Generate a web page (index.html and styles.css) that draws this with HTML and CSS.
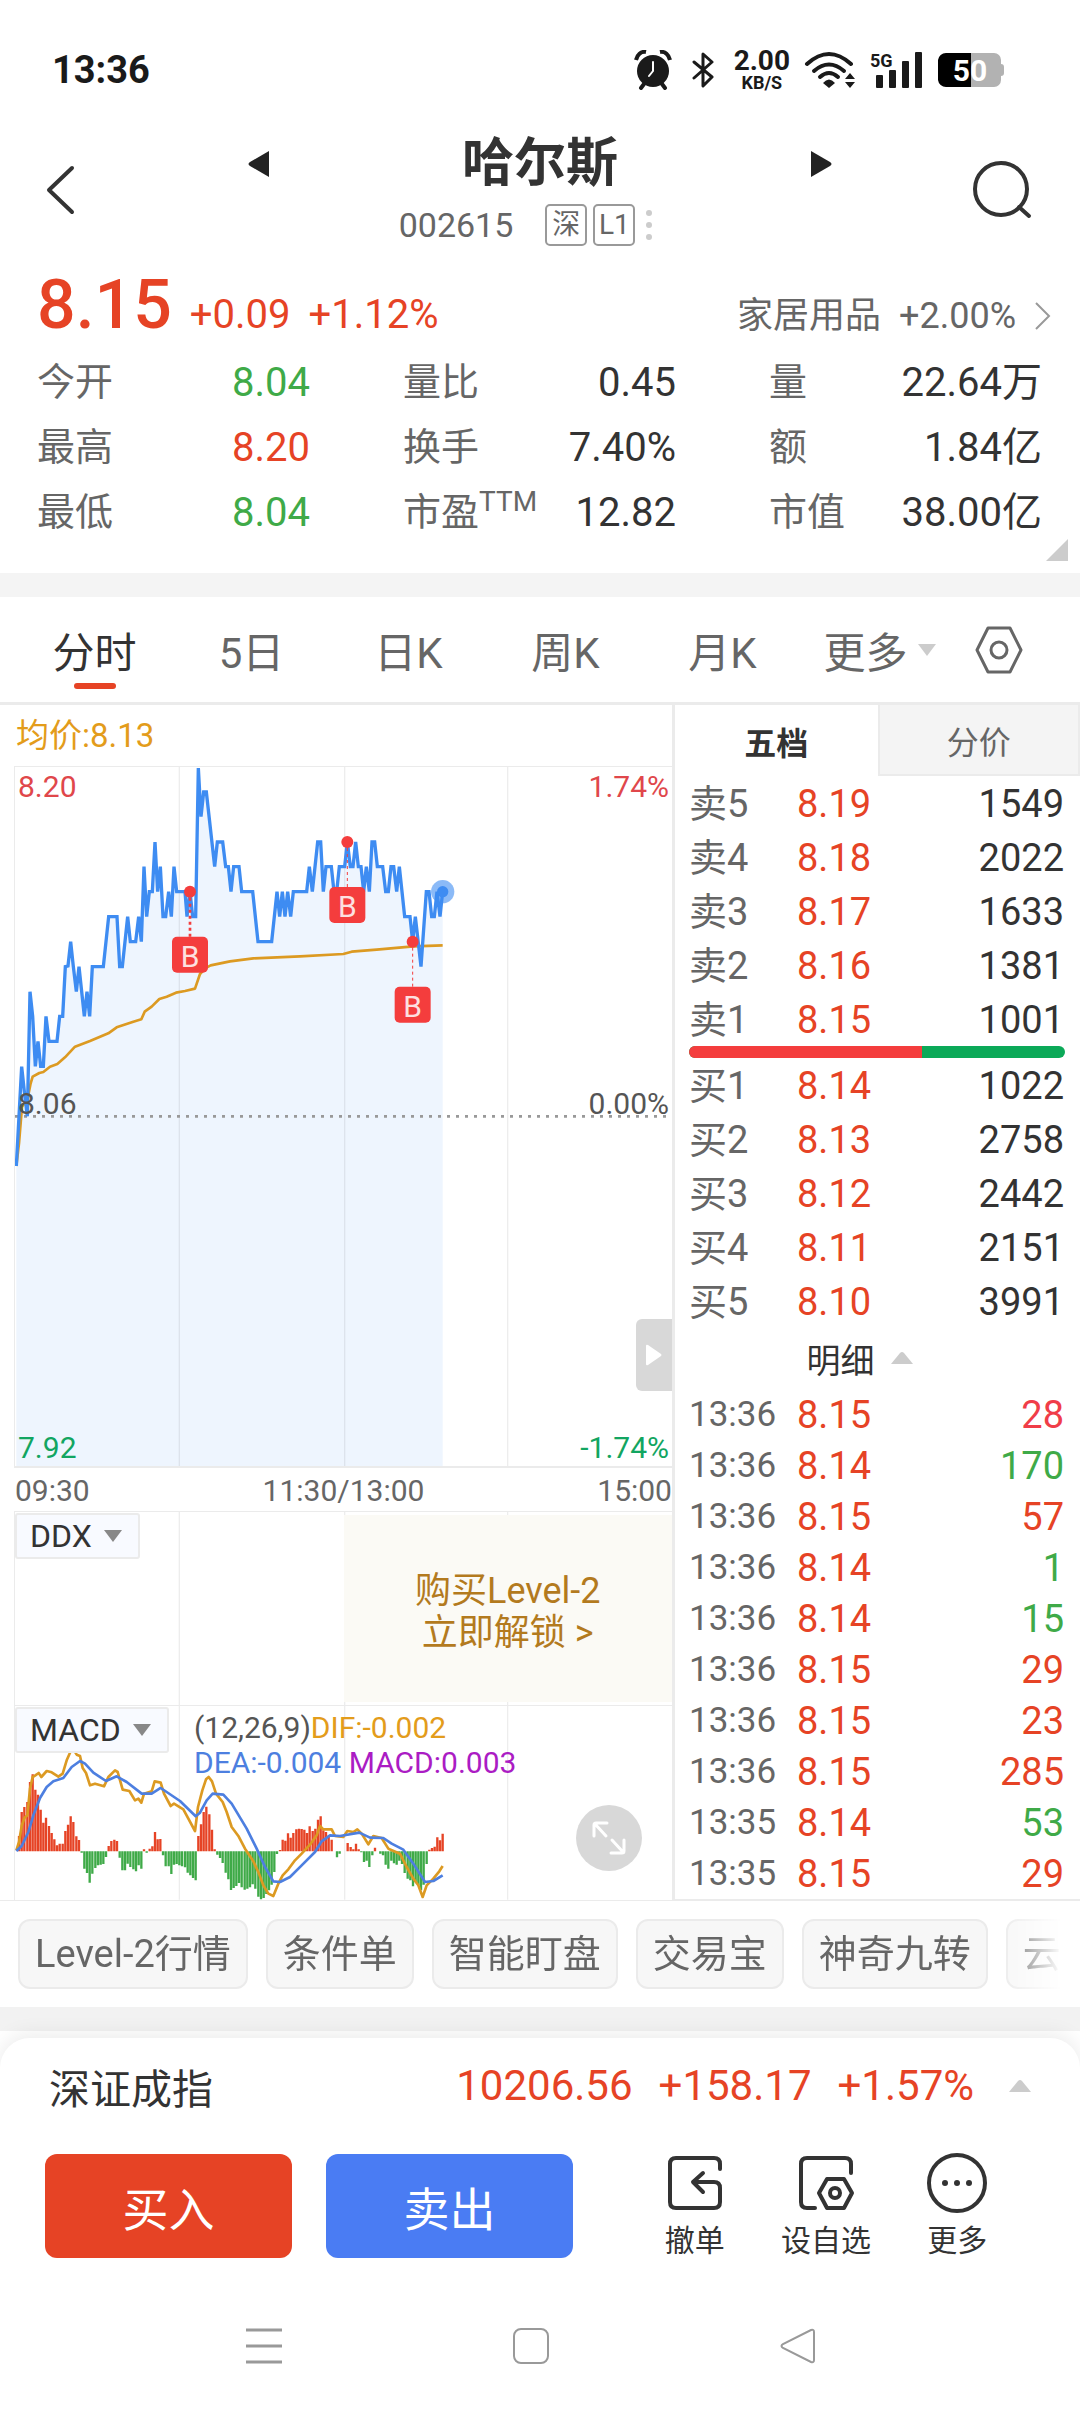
FILE: index.html
```html
<!DOCTYPE html>
<html lang="zh-CN">
<head>
<meta charset="utf-8">
<meta name="viewport" content="width=device-width, initial-scale=1">
<title>哈尔斯 002615</title>
<link rel="stylesheet" href="styles.css">
</head>
<body>
<div class="app">
  <div class="status">
    <span class="status-time">13:36</span>
    <div class="status-icons">
      <svg class="spaced" width="38" height="40" viewBox="0 0 38 40"><circle cx="19" cy="21" r="16" fill="#1a1a1a"/><path d="M2 10C3 5 7 1 12 2M36 10C35 5 31 1 26 2" fill="none" stroke="#1a1a1a" stroke-width="4"/><path d="M10 34l-3 4M28 34l3 4" stroke="#1a1a1a" stroke-width="4" stroke-linecap="round"/><path d="M19 12v9l-4 5" fill="none" stroke="#fff" stroke-width="2" stroke-linecap="round"/></svg>
      <svg class="spaced" width="22" height="38" viewBox="0 0 22 38"><path d="M2 11l18 15-9 9V3l9 8L2 27" fill="none" stroke="#1a1a1a" stroke-width="3" stroke-linejoin="round" stroke-linecap="round"/></svg>
      <span class="net-speed"><b>2.00</b><b class="net-unit">KB/S</b></span>
      <svg width="52" height="38" viewBox="0 0 52 38"><g fill="none" stroke="#1a1a1a" stroke-width="4" stroke-linecap="round"><path d="M3 13Q25-7 47 13"/><path d="M10 20Q25 7 40 20"/><path d="M16 26Q25 18 34 26"/></g><path d="M19 32Q25 25 31 32L25 37z" fill="#1a1a1a"/><path d="M41 28l5-6 5 6zM41 31l5 6 5-6z" fill="#1a1a1a"/></svg>
      <svg class="signal" width="54" height="38" viewBox="0 0 54 38"><text x="0" y="16" class="five-g">5G</text><g fill="#1a1a1a"><rect x="6" y="24" width="7" height="13" rx="1"/><rect x="19" y="19" width="7" height="18" rx="1"/><rect x="32" y="10" width="7" height="27" rx="1"/><rect x="45" y="1" width="7" height="36" rx="1"/></g></svg>
      <svg width="66" height="36" viewBox="0 0 66 36"><path d="M33 1h23a7 7 0 0 1 7 7v4q3 0 3 3v6q0 3-3 3v4a7 7 0 0 1-7 7H33z" fill="#b2b2b2"/><path d="M33 1H8a8 8 0 0 0-8 7v20a8 8 0 0 0 8 7h25z" fill="#000"/><text x="32" y="29" class="battery">50</text></svg>
    </div>
  </div>

  <header class="head">
    <button class="icon-btn" aria-label="返回"><svg width="34" height="52" viewBox="0 0 34 52"><path d="M28 4L5 26l23 22" fill="none" stroke="#333" stroke-width="4" stroke-linecap="round" stroke-linejoin="round"/></svg></button>
    <div class="head-mid">
      <div class="head-title">
        <button class="icon-btn" aria-label="上一只"><svg width="24" height="28" viewBox="0 0 24 28"><path d="M22 1v26L3 16q-3-2 0-4z" fill="#222"/></svg></button>
        <h1>哈尔斯</h1>
        <button class="icon-btn" aria-label="下一只"><svg width="24" height="28" viewBox="0 0 24 28"><path d="M2 1v26l19-11q3-2 0-4z" fill="#222"/></svg></button>
      </div>
      <div class="head-code"><span>002615</span><span class="tag">深</span><span class="tag">L1</span><svg width="8" height="32" viewBox="0 0 8 32" fill="#ccc"><circle cx="4" cy="4" r="3"/><circle cx="4" cy="16" r="3"/><circle cx="4" cy="28" r="3"/></svg></div>
    </div>
    <button class="icon-btn" aria-label="搜索"><svg width="60" height="60" viewBox="0 0 60 60"><circle cx="29" cy="29" r="26" fill="none" stroke="#333" stroke-width="4"/><path d="M47 47l10 9" stroke="#333" stroke-width="4" stroke-linecap="round"/></svg></button>
  </header>

  <section class="quote">
    <div class="quote-top">
      <strong class="price">8.15</strong><span class="change">+0.09</span><span class="change">+1.12%</span>
      <a class="sector" href="#sector"><span>家居用品</span><span class="sector-pct">+2.00%</span><svg width="18" height="30" viewBox="0 0 18 30"><path d="M2 2l13 13L2 28" fill="none" stroke="#999" stroke-width="2"/></svg></a>
    </div>
    <dl class="stats">
      <div><dt>今开</dt><dd class="down">8.04</dd></div>
      <div><dt>量比</dt><dd>0.45</dd></div>
      <div><dt>量</dt><dd>22.64万</dd></div>
      <div><dt>最高</dt><dd class="up">8.20</dd></div>
      <div><dt>换手</dt><dd>7.40%</dd></div>
      <div><dt>额</dt><dd>1.84亿</dd></div>
      <div><dt>最低</dt><dd class="down">8.04</dd></div>
      <div><dt>市盈<sup>TTM</sup></dt><dd>12.82</dd></div>
      <div><dt>市值</dt><dd>38.00亿</dd></div>
    </dl>
    <svg class="corner" width="22" height="22" viewBox="0 0 22 22"><path d="M22 0v22H0z" fill="#ccc"/></svg>
  </section>

  <nav class="periods">
    <button class="period active">分时</button>
    <button class="period">5日</button>
    <button class="period">日K</button>
    <button class="period">周K</button>
    <button class="period">月K</button>
    <button class="period">更多<svg width="18" height="12" viewBox="0 0 18 12"><path d="M0 0h18L9 12z" fill="#ccc"/></svg></button>
    <button class="icon-btn" aria-label="设置"><svg width="48" height="48" viewBox="0 0 48 48" fill="none" stroke="#666" stroke-width="3"><path d="M13 2h22l11 22-11 22H13L2 24z" stroke-linejoin="round"/><circle cx="24" cy="24" r="8"/></svg></button>
  </nav>

  <main class="market">
    <section class="charts">
      <p class="avg">均价:8.13</p>
      <div class="plot">
        <svg class="plot-svg" viewBox="45 201 1971 2097">
          <path class="area" d="M49 2298L49 1398 65 1100 73 1174 82 1249 90 875 98 949 106 1099 114 1024 122 1099 130 1099 138 949 147 1024 171 1024 179 949 188 949 196 800 204 798 212 725 220 800 229 875 237 800 253 949 261 875 269 949 277 800 310 800 326 650 351 650 359 800 367 800 383 650 391 725 407 725 416 650 424 725 432 500 440 650 448 575 457 575 465 426 473 575 481 500 489 650 497 650 506 575 514 650 522 500 530 575 555 575 561 650 570 575 578 650 587 650 595 204 603 350 611 276 619 276 644 500 652 426 668 426 677 500 685 500 693 575 701 500 717 500 725 575 758 575 774 725 815 725 831 575 839 650 847 575 855 650 863 575 872 650 880 575 920 575 928 500 937 575 953 426 962 426 970 575 978 500 994 500 1002 575 1010 575 1018 500 1034 500 1042 426 1051 500 1059 500 1067 426 1075 500 1083 500 1091 575 1099 500 1108 575 1116 426 1124 426 1132 500 1148 500 1157 575 1165 575 1173 500 1181 500 1190 575 1198 500 1214 650 1230 650 1238 725 1246 650 1263 800 1279 575 1287 575 1295 650 1303 650 1311 575 1320 650 1328 575V2298z"/>
          <path class="grid" d="M538 201V2298M1034 201V2298M1523 201V2298"/>
          <path class="base" d="M45 1249H2016"/>
          <polyline class="avg-line" points="49,1398 57,1330 66,1220 82,1200 92,1150 98,1130 118,1119 130,1116 150,1100 172,1092 195,1072 225,1040 270,1023 325,1000 350,982 400,965 424,958 434,935 455,920 478,897 500,890 528,878 555,873 585,866 600,822 615,805 632,796 690,784 760,775 900,769 1030,762 1055,755 1130,749 1240,739 1328,736"/>
          <polyline class="price-line" points="49,1398 65,1100 73,1174 82,1249 90,875 98,949 106,1099 114,1024 122,1099 130,1099 138,949 147,1024 171,1024 179,949 188,949 196,800 204,798 212,725 220,800 229,875 237,800 253,949 261,875 269,949 277,800 310,800 326,650 351,650 359,800 367,800 383,650 391,725 407,725 416,650 424,725 432,500 440,650 448,575 457,575 465,426 473,575 481,500 489,650 497,650 506,575 514,650 522,500 530,575 555,575 561,650 570,575 578,650 587,650 595,204 603,350 611,276 619,276 644,500 652,426 668,426 677,500 685,500 693,575 701,500 717,500 725,575 758,575 774,725 815,725 831,575 839,650 847,575 855,650 863,575 872,650 880,575 920,575 928,500 937,575 953,426 962,426 970,575 978,500 994,500 1002,575 1010,575 1018,500 1034,500 1042,426 1051,500 1059,500 1067,426 1075,500 1083,500 1091,575 1099,500 1108,575 1116,426 1124,426 1132,500 1148,500 1157,575 1165,575 1173,500 1181,500 1190,575 1198,500 1214,650 1230,650 1238,725 1246,650 1263,800 1279,575 1287,575 1295,650 1303,650 1311,575 1320,650 1328,575"/>
          <circle cx="1328" cy="575" r="35" fill="#3e8cf2" opacity=".6"/><circle cx="1328" cy="575" r="17" fill="#3e8cf2"/>
          <g class="mark"><path class="thick" d="M570 575V710"/><circle cx="570" cy="575" r="18"/><rect x="516" y="710" width="108" height="108" rx="15"/><text x="570" y="800">B</text></g>
          <g class="mark"><path d="M1042 426V561"/><circle cx="1042" cy="426" r="18"/><rect x="988" y="561" width="108" height="108" rx="15"/><text x="1042" y="651">B</text></g>
          <g class="mark"><path d="M1238 725V860"/><circle cx="1238" cy="725" r="18"/><rect x="1184" y="860" width="108" height="108" rx="15"/><text x="1238" y="950">B</text></g>
        </svg>
        <span class="lab lab-tl red">8.20</span><span class="lab lab-tr red">1.74%</span>
        <span class="lab lab-ml">8.06</span><span class="lab lab-mr">0.00%</span>
        <span class="lab lab-bl green">7.92</span><span class="lab lab-br green">-1.74%</span>
        <button class="drawer" aria-label="展开"><svg width="18" height="22" viewBox="0 0 18 22"><path d="M1 2q0-2 2-1l13 9q1 1 0 2L3 21q-2 1-2-1z" fill="#fff"/></svg></button>
      </div>
      <div class="times"><span>09:30</span><span>11:30/13:00</span><span>15:00</span></div>
      <div class="sub ddx">
        <svg class="plot-svg" viewBox="45 0 1971 580"><path class="grid" d="M538 0V580M1034 0V580M1523 0V580"/></svg>
        <button class="picker">DDX<svg width="18" height="12" viewBox="0 0 18 12"><path d="M0 0h18L9 12z" fill="#888"/></svg></button>
        <a class="unlock" href="#level2">购买Level-2<br>立即解锁 &gt;</a>
      </div>
      <div class="sub">
        <svg class="plot-svg" viewBox="45 -98 1971 581">
          <path class="grid" d="M538 -102V483M1034 -102V483M1523 -102V483"/>
          <path class="bars bars-up" d="M57 338V292M65 338V220M73 338V205M82 338V190M90 338V130M98 338V107M106 338V153M114 338V168M122 338V213M130 338V252M138 338V237M147 338V262M155 338V283M163 338V302M171 338V320M179 338V315M188 338V315M196 338V277M204 338V258M212 338V233M220 338V250M229 338V293M237 338V304M326 338V322M334 338V307M343 338V303M351 338V307M432 338V332M449 338V330M457 338V323M465 338V280M473 338V302M481 338V301M595 338V292M603 338V257M611 338V220M619 338V204M628 338V227M636 338V273M644 338V332M840 338V334M848 338V303M856 338V306M864 338V284M872 338V297M880 338V283M889 338V272M897 338V270M905 338V271M913 338V273M921 338V283M929 338V263M938 338V277M946 338V270M954 338V243M962 338V233M970 338V275M978 338V280M986 338V291M995 338V303M1043 338V313M1052 338V325M1060 338V332M1068 338V315M1076 338V332M1125 338V327M1288 338V333M1296 338V328M1304 338V324M1312 338V296M1320 338V305M1328 338V285"/>
          <path class="bars bars-down" d="M245 338V342M253 338V390M261 338V403M269 338V432M277 338V405M286 338V388M294 338V380M302 338V378M310 338V376M318 338V355M359 338V357M367 338V395M375 338V395M383 338V375M391 338V385M400 338V392M408 338V398M416 338V380M424 338V390M440 338V342M489 338V350M497 338V383M506 338V383M514 338V406M522 338V378M530 338V376M538 338V380M546 338V383M555 338V386M563 338V402M571 338V410M579 338V418M587 338V425M652 338V348M660 338V358M668 338V373M677 338V402M685 338V422M693 338V454M701 338V448M709 338V442M717 338V433M725 338V446M734 338V453M742 338V450M750 338V446M758 338V437M766 338V450M775 338V474M783 338V482M791 338V478M799 338V466M807 338V455M815 338V438M823 338V400M831 338V346M1011 338V356M1019 338V345M1084 338V341M1092 338V370M1100 338V366M1108 338V385M1117 338V350M1141 338V345M1149 338V350M1157 338V378M1165 338V390M1174 338V366M1182 338V374M1190 338V378M1198 338V366M1206 338V376M1214 338V403M1223 338V420M1231 338V425M1239 338V443M1247 338V430M1255 338V440M1263 338V455M1271 338V438M1280 338V376"/>
          <polyline class="dif-line" points="49,335 57,310 65,262 73,238 82,230 90,150 98,115 106,110 116,103 124,115 140,97 155,101 175,114 188,105 200,65 212,38 222,35 230,48 240,52 248,88 258,103 270,140 285,135 312,143 325,115 345,95 353,100 368,153 388,157 405,185 415,180 424,192 432,165 455,158 464,128 482,132 492,165 512,202 522,195 550,212 565,240 585,277 594,205 607,155 618,122 626,115 636,128 648,165 668,190 680,220 695,265 715,292 735,330 760,368 775,400 790,440 805,465 820,472 835,435 848,410 865,392 885,365 905,345 930,318 950,290 960,262 970,272 995,272 1005,292 1030,295 1042,277 1060,280 1072,272 1085,285 1105,317 1120,292 1145,298 1165,330 1200,345 1220,385 1240,420 1255,440 1268,475 1280,440 1300,420 1318,398 1328,382"/>
          <polyline class="dea-line" points="49,337 65,322 85,280 100,230 120,178 140,145 160,128 190,118 215,85 240,67 255,75 280,102 318,127 350,113 380,130 425,165 455,165 482,148 500,160 540,187 587,233 600,222 620,185 638,165 670,168 695,195 740,270 770,330 795,385 820,428 840,430 870,415 905,380 945,340 965,308 990,290 1020,292 1078,282 1110,297 1150,298 1175,315 1210,333 1240,375 1275,430 1300,427 1328,410"/>
        </svg>
        <button class="picker">MACD<svg width="18" height="12" viewBox="0 0 18 12"><path d="M0 0h18L9 12z" fill="#888"/></svg></button>
        <p class="macd-info">(12,26,9)<span class="dif">DIF:-0.002</span><br><span class="dea">DEA:-0.004</span> <span class="macd">MACD:0.003</span></p>
        <button class="expand" aria-label="全屏"><svg width="34" height="34" viewBox="0 0 34 34" fill="none" stroke="#fff" stroke-width="3" stroke-linecap="round" stroke-linejoin="round"><path d="M15 2H4q-2 0-2 2v11M3 3l11 12M19 32h11q2 0 2-2V19M31 31L20 19"/></svg></button>
      </div>
    </section>

    <section class="book">
      <div class="book-tabs"><button class="book-tab active">五档</button><button class="book-tab">分价</button></div>
      <table class="levels">
        <tr><th>卖5</th><td class="up">8.19</td><td>1549</td></tr>
        <tr><th>卖4</th><td class="up">8.18</td><td>2022</td></tr>
        <tr><th>卖3</th><td class="up">8.17</td><td>1633</td></tr>
        <tr><th>卖2</th><td class="up">8.16</td><td>1381</td></tr>
        <tr><th>卖1</th><td class="up">8.15</td><td>1001</td></tr>
      </table>
      <div class="ratio"><span style="width:62%"></span></div>
      <table class="levels">
        <tr><th>买1</th><td class="up">8.14</td><td>1022</td></tr>
        <tr><th>买2</th><td class="up">8.13</td><td>2758</td></tr>
        <tr><th>买3</th><td class="up">8.12</td><td>2442</td></tr>
        <tr><th>买4</th><td class="up">8.11</td><td>2151</td></tr>
        <tr><th>买5</th><td class="up">8.10</td><td>3991</td></tr>
      </table>
      <button class="detail">明细<svg width="22" height="12" viewBox="0 0 22 12"><path d="M0 12L9 1q2-2 4 0l9 11z" fill="#ccc"/></svg></button>
      <table class="trades">
        <tr><th>13:36</th><td class="up">8.15</td><td class="hot">28</td></tr>
        <tr><th>13:36</th><td class="up">8.14</td><td class="down">170</td></tr>
        <tr><th>13:36</th><td class="up">8.15</td><td class="up">57</td></tr>
        <tr><th>13:36</th><td class="up">8.14</td><td class="down">1</td></tr>
        <tr><th>13:36</th><td class="up">8.14</td><td class="down">15</td></tr>
        <tr><th>13:36</th><td class="up">8.15</td><td class="up">29</td></tr>
        <tr><th>13:36</th><td class="up">8.15</td><td class="up">23</td></tr>
        <tr><th>13:36</th><td class="up">8.15</td><td class="up">285</td></tr>
        <tr><th>13:35</th><td class="up">8.14</td><td class="down">53</td></tr>
        <tr><th>13:35</th><td class="up">8.15</td><td class="up">29</td></tr>
      </table>
    </section>
  </main>

  <div class="chips">
    <button class="chip">Level-2行情</button><button class="chip">条件单</button><button class="chip">智能盯盘</button><button class="chip">交易宝</button><button class="chip">神奇九转</button><button class="chip">云</button>
  </div>

  <footer class="sheet">
    <div class="index">
      <span class="index-name">深证成指</span>
      <span class="index-nums"><span>10206.56</span><span>+158.17</span><span>+1.57%</span></span>
      <svg width="22" height="12" viewBox="0 0 22 12"><path d="M0 12L9 1q2-2 4 0l9 11z" fill="#ccc"/></svg>
    </div>
    <div class="actions">
      <button class="trade buy">买入</button>
      <button class="trade sell">卖出</button>
      <div class="tools">
        <button class="tool"><svg width="60" height="60" viewBox="0 0 60 60" fill="none" stroke="#333" stroke-width="4" stroke-linecap="round" stroke-linejoin="round"><path d="M55 16V11q0-6-6-6H11q-6 0-6 6v38q0 6 6 6h38q6 0 6-6V35q0-6-6-6H28M38 20l-10 9 10 10"/></svg>撤单</button>
        <button class="tool"><svg width="60" height="60" viewBox="0 0 60 60" fill="none" stroke="#333" stroke-width="4" stroke-linecap="round" stroke-linejoin="round"><path d="M55 20V11q0-6-6-6H11q-6 0-6 6v38q0 6 6 6h8M31 26h17l8 14-8 15H31l-8-15z"/><circle cx="39" cy="40" r="5"/></svg>设自选</button>
        <button class="tool"><svg width="60" height="60" viewBox="0 0 60 60"><circle cx="30" cy="30" r="28" fill="none" stroke="#333" stroke-width="4"/><g fill="#333"><circle cx="18" cy="30" r="3"/><circle cx="30" cy="30" r="3"/><circle cx="42" cy="30" r="3"/></g></svg>更多</button>
      </div>
    </div>
    <div class="sysnav">
      <button class="icon-btn" aria-label="最近任务"><svg width="36" height="38" viewBox="0 0 36 38"><path d="M0 3h36M0 19h36M0 35h36" stroke="#999" stroke-width="3"/></svg></button>
      <button class="icon-btn" aria-label="主屏幕"><svg width="36" height="38" viewBox="0 0 36 38"><rect x="1" y="2" width="34" height="34" rx="7" fill="none" stroke="#999" stroke-width="2"/></svg></button>
      <button class="icon-btn" aria-label="后退"><svg width="36" height="38" viewBox="0 0 36 38"><path d="M34 5v28q0 3-3 2L3 21q-3-2 0-4L31 3q3-1 3 2z" fill="none" stroke="#999" stroke-width="2"/></svg></button>
    </div>
  </footer>
</div>
</body>
</html>
```
FILE: styles.css
```css
* { box-sizing: border-box; }
body { margin: 0; background: #fff; color: #333; font-family: Roboto, "Noto Sans CJK SC", sans-serif; }
svg { display: block; flex: none; }
button { margin: 0; padding: 0; border: 0; background: none; font: inherit; color: inherit; }
a { color: inherit; text-decoration: none; }
h1, p, dl, dd { margin: 0; }
.app { display: flex; flex-direction: column; }
.icon-btn { display: flex; align-items: center; justify-content: center; }
.up { color: #e64325; }
.down { color: #3faa48; }
.hot { color: #f03d48; }
.red { color: #e0474b; }
.green { color: #12a561; }

.status { display: flex; justify-content: space-between; align-items: center; height: 130px; padding: 10px 76px 0 52px; }
.status-time { font-size: 38px; font-weight: 700; color: #1a1a1a; }
.status-icons { display: flex; align-items: center; gap: 14px; }
.status-icons .spaced { margin-right: 6px; }
.signal { overflow: visible; }
.net-speed { display: flex; flex-direction: column; align-items: center; font-size: 28px; line-height: 26px; color: #1a1a1a; }
.net-unit { font-size: 18px; line-height: 18px; }
.five-g { font: 700 18px Roboto, sans-serif; fill: #1a1a1a; }
.battery { font: 700 30px Roboto, sans-serif; fill: #fff; text-anchor: middle; }

.head { display: flex; align-items: center; justify-content: space-between; height: 130px; padding: 0 48px 10px 44px; }
.head-mid { flex: 1; display: flex; flex-direction: column; align-items: center; gap: 10px; padding: 0 139px 0 169px; }
.head-title { display: flex; align-items: center; justify-content: space-between; width: 100%; }
.head-title h1 { font-size: 52px; line-height: 60px; font-weight: 700; }
.head-code { display: flex; align-items: center; gap: 6px; font-size: 34px; line-height: 42px; color: #666; margin-left: -28px; }
.head-code > :first-child { margin-right: 26px; }
.tag { min-width: 42px; height: 42px; border: 2px solid #999; border-radius: 5px; font-size: 28px; line-height: 38px; text-align: center; }
.head-code svg { margin-left: 4px; }

.quote { position: relative; padding: 0 38px 0 37px; height: 313px; }
.quote-top { display: flex; align-items: baseline; height: 90px; line-height: 90px; }
.price { font-size: 68px; font-weight: 500; color: #e64325; margin-right: 18px; }
.change { font-size: 40px; color: #e64325; margin-right: 18px; }
.sector { display: flex; align-items: center; gap: 18px; margin-left: auto; margin-right: -10px; font-size: 36px; color: #666; }
.stats { display: grid; grid-template-columns: repeat(3, 1fr); column-gap: 93px; }
.stats > div { display: flex; justify-content: space-between; height: 65px; line-height: 65px; white-space: nowrap; }
.stats dt { font-size: 38px; color: #666; }
.stats dd { font-size: 40px; }
.stats sup { font-size: 28px; line-height: 28px; }
.corner { position: absolute; right: 12px; bottom: 12px; }

.periods { display: grid; grid-template-columns: repeat(6, 1fr) 82px; align-items: stretch; height: 132px; padding: 0 40px 0 16px; border-top: 24px solid #f4f4f4; border-bottom: 3px solid #ebebeb; }
.period { position: relative; display: flex; align-items: center; justify-content: center; gap: 10px; font-size: 42px; color: #666; }
.period.active { color: #333; }
.period.active::after { content: ""; position: absolute; left: 50%; bottom: 13px; width: 42px; height: 6px; margin-left: -21px; border-radius: 3px; background: #e64325; }

.market { display: grid; grid-template-columns: 672fr 408fr; }
.charts { padding-left: 14px; border-bottom: 1px solid #ebebeb; }
.avg { height: 61px; line-height: 61px; padding-left: 2px; font-size: 33px; color: #e39c1b; }
.plot { position: relative; border: solid #ebebeb; border-width: 1px 0 2px 1px; }
.plot-svg { width: 100%; height: auto; overflow: hidden; }
.grid { fill: none; stroke: #000; stroke-opacity: .07; stroke-width: 4; }
.area { fill: #eef5fe; }
.base { stroke: #999; stroke-width: 8; stroke-dasharray: 9 18; }
.avg-line, .dif-line { fill: none; stroke: #dc9a22; stroke-width: 8; stroke-linejoin: round; }
.price-line { fill: none; stroke: #3e8cf2; stroke-width: 10; }
.dea-line { fill: none; stroke: #4d7fe0; stroke-width: 8; stroke-linejoin: round; }
.mark { fill: #f43d3d; }
.mark path { stroke: #f43d3d; stroke-width: 3; stroke-dasharray: 9 9; }
.mark .thick { stroke-width: 8; }
.mark text { fill: #fde0e0; font-size: 90px; text-anchor: middle; }
.bars { stroke-width: 7; }
.bars-up { stroke: #e64325; }
.bars-down { stroke: #3faa48; }
.lab { position: absolute; font-size: 30px; line-height: 36px; color: #555; }
.lab.red { color: #e0474b; }
.lab.green { color: #12a561; }
.lab-tl, .lab-tr { top: 2px; }
.lab-ml, .lab-mr { bottom: 50%; line-height: 26px; }
.lab-bl, .lab-br { bottom: 0; }
.lab-tl, .lab-ml, .lab-bl { left: 3px; }
.lab-tr, .lab-mr, .lab-br { right: 3px; }
.drawer { position: absolute; right: 0; bottom: 75px; width: 36px; height: 72px; display: flex; align-items: center; justify-content: center; border-radius: 6px 0 0 6px; background: #d8d8d8; }
.times { display: flex; justify-content: space-between; height: 43px; line-height: 45px; padding-left: 1px; font-size: 30px; color: #666; }
.sub { position: relative; border: solid #ebebeb; border-width: 1px 0 0 1px; }
.picker { position: absolute; left: 0; top: 1px; display: flex; align-items: center; gap: 12px; height: 46px; padding: 0 16px 0 13px; border: 2px solid #ebebeb; border-radius: 3px; background: #f8faff; font-size: 32px; }
.unlock { position: absolute; left: 50%; right: 0; top: 3px; bottom: 3px; display: flex; align-items: center; justify-content: center; padding-top: 6px; text-align: center; background: #fbfaf5; color: #b37a1e; font-size: 36px; line-height: 42px; }
.macd-info { position: absolute; left: 179px; top: 4px; font-size: 30px; line-height: 35px; color: #555; white-space: nowrap; }
.dif { color: #e39c1b; }
.dea { color: #4d7fe0; }
.macd { color: #ab1cc4; }
.expand { position: absolute; right: 30px; bottom: 29px; width: 66px; height: 66px; display: flex; align-items: center; justify-content: center; border-radius: 50%; background: #d8d8d8; }

.book { display: flex; flex-direction: column; border-left: 3px solid #ebebeb; border-bottom: 2px solid #ebebeb; }
.book-tabs { display: grid; grid-template-columns: 1fr 1fr; height: 71px; font-size: 32px; }
.book-tab { color: #666; background: #f4f4f4; border: solid #ebebeb; border-width: 0 2px 2px; }
.book-tab.active { color: #333; font-weight: 700; background: none; border: 0; }
.levels, .trades { width: 100%; border-collapse: collapse; table-layout: fixed; }
.book tr { height: 54px; }
.book .trades tr { height: 51px; }
.book th, .book td { padding: 2px 0 0; text-align: left; font-size: 38px; line-height: 48px; font-weight: 400; }
.book th { width: 122px; padding-left: 14px; color: #666; }
.book .trades th { font-size: 35px; }
.book td:last-child { text-align: right; padding-right: 16px; }
.ratio { height: 12px; margin: 0 15px 0 14px; border-radius: 6px; overflow: hidden; background: #0ba958; }
.ratio span { display: block; height: 100%; background: #f43d3d; }
.detail { display: flex; align-items: center; justify-content: center; gap: 16px; height: 60px; padding-right: 36px; font-size: 34px; }

.chips { display: flex; gap: 18px; overflow: hidden; margin-right: 18px; padding: 18px 0 18px 18px; mask-image: linear-gradient(to right, #000 94%, transparent); }
.chip { flex: none; height: 70px; padding: 0 15px; border: 2px solid #ebebeb; border-radius: 12px; background: #f7f7f7; font-size: 38px; line-height: 56px; color: #666; }

.sheet { border-radius: 30px 30px 0 0; background: #fff; box-shadow: 0 -4px 20px rgba(0, 0, 0, .08); }
.chips + .sheet { margin-top: 31px; position: relative; }
.chips + .sheet::before { content: ""; position: absolute; z-index: -1; left: 0; right: 0; top: -31px; height: 24px; background: #f2f2f2; }
.index { display: flex; align-items: center; height: 96px; padding: 0 49px; }
.index-name { font-size: 41px; }
.index-nums { display: flex; gap: 26px; margin-left: auto; margin-right: 35px; font-size: 42px; color: #e64325; }
.actions { display: grid; grid-template-columns: 247fr 247fr 416fr; column-gap: 34px; align-items: center; height: 144px; padding: 0 57px 0 45px; }
.trade { height: 104px; border-radius: 12px; font-size: 46px; color: #fff; }
.buy { background: #e64325; }
.sell { background: #4a7cf3; }
.tools { display: grid; grid-template-columns: repeat(3, 1fr); padding: 2px 0 0 22px; }
.tool { display: flex; flex-direction: column; align-items: center; gap: 8px; font-size: 30px; line-height: 40px; white-space: nowrap; }
.sysnav { display: grid; grid-template-columns: repeat(3, 267px); justify-content: center; align-items: center; height: 134px; padding: 2px 19px 0 0; }
```
